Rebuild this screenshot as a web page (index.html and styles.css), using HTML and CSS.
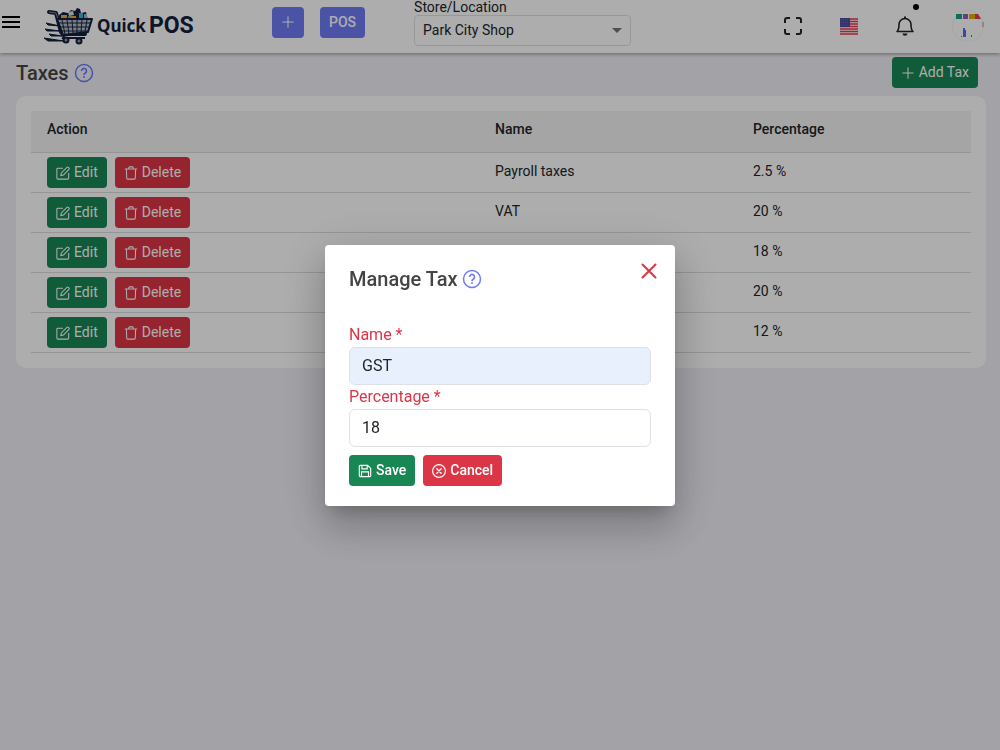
FILE: index.html
```html
<!DOCTYPE html>
<html lang="en">
<head>
    <meta charset="UTF-8">
    <meta name="viewport" content="width=device-width, initial-scale=1.0">
    <title>Taxes - Quick POS</title>
    <link rel="stylesheet" href="styles.css">
</head>
<body>
    <!-- Shared icons -->
    <svg class="sprite" aria-hidden="true">
        <symbol id="icon-edit" viewBox="0 0 16 16">
            <path d="M14.500 8v6a1 1 0 0 1-1 1H2a1 1 0 0 1-1-1V3.500a1 1 0 0 1 1-1h6" fill="none" stroke="currentColor" stroke-width="1.200"/>
            <path d="M5.500 11l.6-3L12.500 1.500a1.200 1.200 0 0 1 1.700 0l.6.6a1.200 1.200 0 0 1 0 1.700L8.400 10.300z" fill="none" stroke="currentColor" stroke-width="1.200" stroke-linejoin="round"/>
        </symbol>
        <symbol id="icon-trash" viewBox="0 0 16 16">
            <path d="M1 3.500h14M5.500 3.500V2a1 1 0 0 1 1-1h3a1 1 0 0 1 1 1v1.500M2.700 3.500l.4 10.500a1 1 0 0 0 1 1h7.800a1 1 0 0 0 1-1l.4-10.500" fill="none" stroke="currentColor" stroke-width="1.200"/>
        </symbol>
        <symbol id="icon-plus" viewBox="0 0 16 16">
            <path d="M8 2v12M2 8h12" fill="none" stroke="currentColor" stroke-width="1.200" stroke-linecap="round"/>
        </symbol>
        <symbol id="icon-help" viewBox="0 0 20 20">
            <circle cx="10" cy="10" r="8.500" fill="none" stroke="currentColor" stroke-width="1.500"/>
            <path d="M7.500 8a2.500 2.500 0 1 1 3.900 2c-.9.600-1.400 1-1.400 1.900" fill="none" stroke="currentColor" stroke-width="1.600"/>
            <circle cx="10" cy="14" r="1" fill="currentColor"/>
        </symbol>
    </svg>

    <header class="topbar">
        <button class="icon-btn menu-btn" aria-label="Menu">
            <svg width="18" height="12" viewBox="0 0 18 12"><path d="M0 1h18M0 6h18M0 11h18" stroke="#000" stroke-width="2"/></svg>
        </button>
        <a class="logo" href="#">
            <svg width="50" height="38" viewBox="0 0 50 38" aria-hidden="true">
                <path d="M2 16l14 3-12-1zM1 22l15 2-13 0zM5 27l14 2-12 0zM0 31l20 3-16 0z" fill="#14213d" stroke="#14213d"/>
                <path d="M15 12V8l4-3 5 1 3-3 4 1 2-3 3 1 1 4 5-1 2 8z" fill="#14213d"/>
                <path d="M17 8h6v4h-6zM25 9h7v4h-7z" fill="#f4a340"/>
                <path d="M24 5l5-1 1 4-5 1z" fill="#d9dde4"/>
                <path d="M35 6h4v7h-4zM24 9h2v3h-2z" fill="#35b6df"/>
                <path d="M40 7h3v5h-3z" fill="#a9b2c0"/>
                <path d="M5 5l7 1 5 19c1 2 2 2 4 2h20" fill="none" stroke="#14213d" stroke-width="4" stroke-linecap="round" stroke-linejoin="round"/>
                <path d="M5 5l7 1 2 6" fill="none" stroke="#7d8799"/>
                <path d="M13 12h35l-4 13-25 3z" fill="#b4bbc8" stroke="#14213d" stroke-width="2" stroke-linejoin="round"/>
                <path d="M15 16h31M16 20h29M18 24h26M18 13l3 14M23 13l2 14M28 13l1 13M33 13v13M38 13l-1 12M43 13l-2 12" fill="none" stroke="#14213d"/>
                <path d="M21 27l-2 4h22" fill="none" stroke="#14213d" stroke-width="2"/>
                <circle cx="22" cy="33" r="2.500" fill="#8b93a3" stroke="#14213d" stroke-width="2"/>
                <circle cx="35" cy="34" r="2.500" fill="#8b93a3" stroke="#14213d" stroke-width="2"/>
            </svg>
            <span class="logo-quick">Quick</span>
            <span class="logo-pos">POS</span>
        </a>
        <div class="quick-actions">
            <button class="btn btn-primary" aria-label="New"><svg class="icon"><use href="#icon-plus"/></svg></button>
            <button class="btn btn-primary">POS</button>
        </div>
        <div class="store">
            <label for="store">Store/Location</label>
            <select id="store">
                <option>Park City Shop</option>
            </select>
        </div>
        <nav class="tools">
            <button class="icon-btn" aria-label="Fullscreen">
                <svg width="18" height="18" viewBox="0 0 18 18"><path d="M1 6V3a2 2 0 0 1 2-2h3M12 1h3a2 2 0 0 1 2 2v3M17 12v3a2 2 0 0 1-2 2h-3M6 17H3a2 2 0 0 1-2-2v-3" fill="none" stroke="#212529" stroke-width="2"/></svg>
            </button>
            <button class="icon-btn" aria-label="Language">
                <svg width="18" height="17" viewBox="0 0 18 17">
                    <path d="M0 0h18v17H0z" fill="#fff"/>
                    <path d="M0 1h18M0 3.500h18M0 6h18M0 8.500h18M0 11h18M0 13.500h18M0 16h18" stroke="#e8384f" stroke-width="1.400"/>
                    <path d="M0 0h10v9H0z" fill="#4a4f9c"/>
                    <path d="M1 2h8M1 4.500h8M1 7h8" stroke="#6a6eb0" stroke-dasharray="1 1"/>
                </svg>
            </button>
            <button class="icon-btn bell" aria-label="Notifications">
                <svg width="18" height="20" viewBox="0 0 18 20">
                    <path d="M1 15.500c1.500-1.200 2-3.500 2-7a6 6 0 0 1 12 0c0 3.500.5 5.800 2 7z" fill="none" stroke="#212529" stroke-width="1.600" stroke-linejoin="round"/>
                    <path d="M6.500 17.500h5a2.500 2.200 0 0 1-5 0zM8 2V.500h2V2z" fill="#212529"/>
                </svg>
                <span class="dot"></span>
            </button>
            <button class="icon-btn" aria-label="Account">
                <svg width="32" height="32" viewBox="0 0 32 32">
                    <circle cx="16" cy="16" r="15.500" fill="#fff" stroke="#f4f4f4"/>
                    <path d="M4 4h6v5H4z" fill="#16a085"/>
                    <path d="M11 4h5v5h-5z" fill="#9b59b6"/>
                    <path d="M17 4h6v5h-6z" fill="#e0b000"/>
                    <path d="M23 4h3l3 5h-6z" fill="#e8384f"/>
                    <path d="M11 18h2v9h-2zM13 20h1v7h-1zM19 25h1v2h-1zM9 26h1v1H9z" fill="#5a6bef"/>
                    <path d="M31 12v5" stroke="#999"/>
                </svg>
            </button>
        </nav>
    </header>

    <main class="page">
        <div class="page-header">
            <h1>Taxes <a class="help" href="#" aria-label="Help"><svg><use href="#icon-help"/></svg></a></h1>
            <button class="btn btn-success"><svg class="icon"><use href="#icon-plus"/></svg> Add Tax</button>
        </div>

        <div class="card">
            <table>
                <thead>
                    <tr>
                        <th class="col-action">Action</th>
                        <th class="col-name">Name</th>
                        <th>Percentage</th>
                    </tr>
                </thead>
                <tbody>
                    <tr>
                        <td><div class="actions">
                            <button class="btn btn-success"><svg class="icon"><use href="#icon-edit"/></svg> Edit</button>
                            <button class="btn btn-danger"><svg class="icon"><use href="#icon-trash"/></svg> Delete</button>
                        </div></td>
                        <td>Payroll taxes</td>
                        <td>2.5 %</td>
                    </tr>
                    <tr>
                        <td><div class="actions">
                            <button class="btn btn-success"><svg class="icon"><use href="#icon-edit"/></svg> Edit</button>
                            <button class="btn btn-danger"><svg class="icon"><use href="#icon-trash"/></svg> Delete</button>
                        </div></td>
                        <td>VAT</td>
                        <td>20 %</td>
                    </tr>
                    <tr>
                        <td><div class="actions">
                            <button class="btn btn-success"><svg class="icon"><use href="#icon-edit"/></svg> Edit</button>
                            <button class="btn btn-danger"><svg class="icon"><use href="#icon-trash"/></svg> Delete</button>
                        </div></td>
                        <td></td>
                        <td>18 %</td>
                    </tr>
                    <tr>
                        <td><div class="actions">
                            <button class="btn btn-success"><svg class="icon"><use href="#icon-edit"/></svg> Edit</button>
                            <button class="btn btn-danger"><svg class="icon"><use href="#icon-trash"/></svg> Delete</button>
                        </div></td>
                        <td></td>
                        <td>20 %</td>
                    </tr>
                    <tr>
                        <td><div class="actions">
                            <button class="btn btn-success"><svg class="icon"><use href="#icon-edit"/></svg> Edit</button>
                            <button class="btn btn-danger"><svg class="icon"><use href="#icon-trash"/></svg> Delete</button>
                        </div></td>
                        <td></td>
                        <td>12 %</td>
                    </tr>
                </tbody>
            </table>
        </div>
    </main>

    <div class="backdrop">
        <form class="modal" role="dialog" aria-labelledby="modal-title">
            <div class="modal-header">
                <h2 id="modal-title">Manage Tax <a class="help" href="#" aria-label="Help"><svg><use href="#icon-help"/></svg></a></h2>
                <button type="button" class="icon-btn" aria-label="Close">
                    <svg width="16" height="16" viewBox="0 0 16 16"><path d="M1.500 1.500l13 13M14.500 1.500l-13 13" stroke="#dc3545" stroke-width="2" stroke-linecap="round"/></svg>
                </button>
            </div>
            <label for="name">Name *</label>
            <input type="text" id="name" class="autofilled" value="GST">
            <label for="percentage">Percentage *</label>
            <input type="text" id="percentage" value="18">
            <div class="actions modal-footer">
                <button type="button" class="btn btn-success">
                    <svg class="icon" viewBox="0 0 16 16"><path d="M2.500 1.500h8.500l3.500 3.500v8.500a1 1 0 0 1-1 1h-11a1 1 0 0 1-1-1v-11a1 1 0 0 1 1-1zM4.500 1.500v4h6v-4M4 14.500V9h8v5.500" fill="none" stroke="currentColor" stroke-width="1.300"/></svg>
                    Save
                </button>
                <button type="button" class="btn btn-danger">
                    <svg class="icon" viewBox="0 0 16 16"><circle cx="8" cy="8" r="7.300" fill="none" stroke="currentColor" stroke-width="1.300"/><path d="M5.500 5.500l5 5M10.500 5.500l-5 5" stroke="currentColor" stroke-width="1.500" stroke-linecap="round"/></svg>
                    Cancel
                </button>
            </div>
        </form>
    </div>
</body>
</html>
```
FILE: styles.css
```css
* {
    box-sizing: border-box;
}

body {
    margin: 0;
    min-height: 100vh;
    font-family: Roboto, "Liberation Sans", sans-serif;
    font-size: 14px;
    line-height: 20px;
    background: #f1f0f7;
    color: #212529;
}

button,
input,
select {
    font-family: inherit;
}

.sprite {
    display: block;
    width: 0;
    height: 0;
    overflow: hidden;
}

/* Buttons */
.btn {
    display: inline-flex;
    align-items: center;
    gap: 4px;
    height: 31px;
    padding: 0 9px 1px;
    border: none;
    border-radius: 4px;
    color: white;
    font-size: 14px;
    cursor: pointer;
    white-space: nowrap;
}

.icon {
    width: 14px;
    height: 14px;
    margin-top: 2px;
}

.btn-primary {
    background: #6f7bf7;
    font-weight: 500;
}

.btn-success {
    background: #198754;
}

.btn-danger {
    background: #dc3545;
}

.icon-btn {
    display: flex;
    padding: 0;
    border: none;
    background: none;
    cursor: pointer;
}

.actions {
    display: flex;
    gap: 8px;
}

.help {
    display: flex;
    color: #6f7bf7;
}

.help svg {
    width: 20px;
    height: 20px;
}

/* Top bar */
.topbar {
    display: flex;
    align-items: flex-start;
    height: 53px;
    padding: 0 16px 0 2px;
    background: white;
    box-shadow: 0 1px 4px rgba(0, 0, 0, 0.4);
    position: relative;
}

.menu-btn {
    margin-top: 16px;
}

.logo {
    display: flex;
    align-items: center;
    gap: 3px;
    width: 150px;
    height: 38px;
    margin: 7px 0 0 24px;
    color: #14213d;
    text-decoration: none;
    font-weight: 700;
}

.logo svg {
    flex: none;
}

.logo-quick {
    font-family: "Noto Sans", sans-serif;
    font-size: 17px;
}

.logo-pos {
    font-size: 23px;
}

.quick-actions {
    display: flex;
    gap: 16px;
    margin: 7px 0 0 78px;
}

.quick-actions .icon {
    margin: 0;
}

.store {
    display: flex;
    flex-direction: column;
    gap: 1px;
    width: 217px;
    margin-left: 49px;
}

.store label {
    line-height: 14px;
}

.store select {
    height: 31px;
    padding: 0 8px 2px;
    border: 1px solid #dee2e6;
    border-radius: 4px;
    background: url("data:image/svg+xml,%3Csvg xmlns='http://www.w3.org/2000/svg' viewBox='0 0 10 5'%3E%3Cpath d='M0 0h10L5 5z' fill='%23757575'/%3E%3C/svg%3E") no-repeat right 8px center / 10px 5px white;
    appearance: none;
    color: #212529;
    font-size: 14px;
}

.tools {
    display: flex;
    align-items: center;
    gap: 38px;
    height: 52px;
    margin-left: auto;
}

.bell {
    position: relative;
}

.dot {
    position: absolute;
    top: -12px;
    right: -5px;
    width: 6px;
    height: 6px;
    border-radius: 50%;
    background: black;
}

/* Page */
.page {
    padding: 4px 14px 16px 16px;
}

.page-header {
    display: flex;
    justify-content: space-between;
    height: 39px;
    margin-right: 8px;
}

h1,
h2 {
    display: flex;
    align-items: center;
    gap: 5px;
    margin: 0;
    color: #444;
    font-size: 20px;
    line-height: 32px;
    font-weight: 500;
}

h1 {
    height: 32px;
}

.card {
    padding: 15px;
    border-radius: 10px;
    background: white;
}

table {
    width: 100%;
    border-collapse: collapse;
    table-layout: fixed;
}

th,
td {
    height: 40px;
    padding: 0 16px;
    border-bottom: 1px solid #dcdcdc;
    text-align: left;
}

th {
    height: 41px;
    padding-bottom: 4px;
    background: #f4f4f4;
    font-weight: 500;
}

td {
    padding-bottom: 2px;
}

td .actions {
    padding-top: 2px;
}

.col-action {
    width: 448px;
}

.col-name {
    width: 258px;
}

/* Modal */
.backdrop {
    position: fixed;
    inset: 0;
    display: flex;
    align-items: center;
    justify-content: center;
    background: rgba(0, 0, 0, 0.32);
}

.modal {
    width: 350px;
    padding: 18px 24px 20px;
    border-radius: 4px;
    background: white;
    box-shadow: 0 11px 15px -7px rgba(0, 0, 0, 0.2), 0 24px 38px 3px rgba(0, 0, 0, 0.14), 0 9px 46px 8px rgba(0, 0, 0, 0.12);
}

.modal-header {
    display: flex;
    justify-content: space-between;
    align-items: flex-start;
    margin: 0 -6px 28px 0;
}

.modal label {
    display: block;
    color: #dc3545;
    font-size: 16px;
    line-height: 24px;
}

.modal input {
    display: block;
    width: 100%;
    height: 38px;
    padding: 0 12px;
    border: 1px solid #dee2e6;
    border-radius: 6px;
    background: white;
    color: #212529;
    font-size: 16px;
}

.modal input.autofilled {
    background: #e8f0fe;
}

.modal-footer {
    margin-top: 8px;
}

.modal-footer .btn {
    font-weight: 500;
}
```
